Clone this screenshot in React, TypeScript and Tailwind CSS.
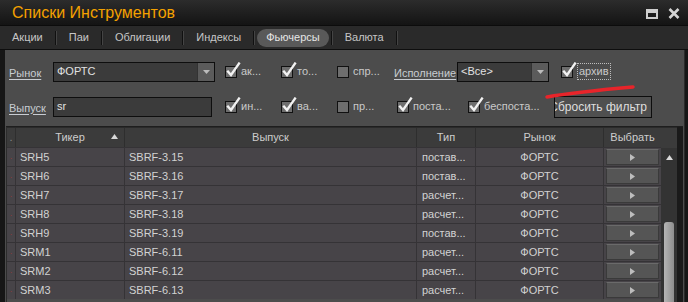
import React from 'react';

const font = { fontFamily: '"Liberation Sans", Arial, sans-serif' };

const rows = [
  { ticker: 'SRH5', issue: 'SBRF-3.15', type: 'постав...' },
  { ticker: 'SRH6', issue: 'SBRF-3.16', type: 'постав...' },
  { ticker: 'SRH7', issue: 'SBRF-3.17', type: 'расчет...' },
  { ticker: 'SRH8', issue: 'SBRF-3.18', type: 'расчет...' },
  { ticker: 'SRH9', issue: 'SBRF-3.19', type: 'постав...' },
  { ticker: 'SRM1', issue: 'SBRF-6.11', type: 'расчет...' },
  { ticker: 'SRM2', issue: 'SBRF-6.12', type: 'расчет...' },
  { ticker: 'SRM3', issue: 'SBRF-6.13', type: 'расчет...' },
];

const tabs = ['Акции', 'Паи', 'Облигации', 'Индексы', 'Фьючерсы', 'Валюта'];

const Check = ({ checked, label, width, focus }: { checked: boolean; label: string; width: string; focus?: boolean }) => (
  <div className={`flex items-center shrink-0 ${width}`}>
    <div className="relative w-[12px] h-[12px] border border-[#111] bg-[#6e6e6e] shrink-0">
      {checked && (
        <svg className="absolute -top-[5px] left-[0px]" width="15" height="16" viewBox="0 0 15 16">
          <path d="M2 9.5 L5 13 L13 1.5" fill="none" stroke="#f2f2f2" strokeWidth="2.3" strokeLinecap="square" />
        </svg>
      )}
    </div>
    <span
      className={`ml-[4px] text-[11px] text-[#c9c9c9] leading-none ${focus ? 'border border-dotted border-[#bdbdbd] px-[1px] py-[2px]' : ''}`}
    >
      {label}
    </span>
  </div>
);

const LinkLabel = ({ text, width }: { text: string; width: string }) => (
  <div className={`shrink-0 ${width}`}>
    <span className="text-[11px] text-[#c8ccd2] underline underline-offset-2">{text}</span>
  </div>
);

const Select = ({ value, width }: { value: string; width: string }) => (
  <div className={`flex h-[20px] border border-[#0e0e0e] bg-[#3b3b3b] shrink-0 ${width}`}>
    <div className="flex-1 flex items-center pl-[3px] text-[11px] text-[#e2e2e2]">{value}</div>
    <div className="w-[17px] flex items-center justify-center bg-[#5b5b5b] border-l border-[#333]">
      <svg width="7" height="4" viewBox="0 0 7 4">
        <path d="M0 0 H7 L3.5 4 Z" fill="#bcbcbc" />
      </svg>
    </div>
  </div>
);

const Sep = () => <span className="w-[2px] h-[14px] border-l border-[#101010] border-r border-r-[#444] mx-[7px]" />;

const cols = 'grid grid-cols-[9px_109px_292px_59px_128px_57px]';

export default function App() {
  return (
    <div className="relative w-[688px] h-[302px] overflow-hidden bg-[#161616] flex flex-col" style={font}>
      {/* Title bar */}
      <div className="h-[25px] shrink-0 flex items-center justify-between pl-[12px] pr-[8px] bg-gradient-to-b from-[#2c2c2c] to-[#141414]">
        <span className="text-[16px] leading-none text-[#f4a100]">Списки Инструментов</span>
        <div className="flex items-center gap-[10px] pt-[2px]">
          <div className="w-[12px] h-[10px] border-2 border-t-[4px] border-[#cfcfcf]" />
          <svg width="12" height="11" viewBox="0 0 12 11">
            <path d="M1.5 1 L10.5 10 M10.5 1 L1.5 10" stroke="#d4d4d4" strokeWidth="2.6" />
          </svg>
        </div>
      </div>

      {/* Tabs */}
      <div className="h-[24px] shrink-0 flex items-center bg-[#2a2a2a] border-t border-[#0c0c0c] pl-[7px]">
        {tabs.map((t) => (
          <React.Fragment key={t}>
            {t === 'Фьючерсы' ? (
              <span className="px-[9px] h-[18px] -mx-[5px] flex items-center rounded-full bg-[#595959] text-[11px] text-[#e6e6e6]">
                {t}
              </span>
            ) : (
              <span className="px-[5px] text-[11px] text-[#c6c6c6]">{t}</span>
            )}
            <Sep />
          </React.Fragment>
        ))}
      </div>

      {/* Panel */}
      <div className="flex-1 flex flex-col border-t border-[#0e0e0e] pl-[5px] pr-[3px] bg-[#161616]">
        <div className="flex-1 flex flex-col bg-[#4c4c4c] border-r border-[#2a2a2a]">
          {/* Filters */}
          <div className="h-[76px] shrink-0 flex flex-col pt-[11px] pl-[4px]">
            <div className="flex items-center h-[21px]">
              <LinkLabel text="Рынок" width="w-[44px]" />
              <Select value="ФОРТС" width="w-[162px]" />
              <div className="w-[10px] shrink-0" />
              <Check checked label="ак..." width="w-[56px]" />
              <Check checked label="то..." width="w-[56px]" />
              <Check checked={false} label="спр..." width="w-[57px]" />
              <LinkLabel text="Исполнение" width="w-[63px]" />
              <Select value="<Все>" width="w-[92px]" />
              <div className="w-[12px] shrink-0" />
              <Check checked focus label="архив" width="w-[60px]" />
            </div>
            <div className="flex items-center h-[23px] mt-[13px]">
              <LinkLabel text="Выпуск" width="w-[44px]" />
              <div className="w-[159px] h-[20px] shrink-0 border border-[#0e0e0e] bg-[#3b3b3b] flex items-center pl-[3px] text-[11px] text-[#e2e2e2]">
                sr
              </div>
              <div className="w-[13px] shrink-0" />
              <Check checked label="ин..." width="w-[56px]" />
              <Check checked label="ва..." width="w-[56px]" />
              <Check checked={false} label="пр..." width="w-[60px]" />
              <Check checked label="поста..." width="w-[71px]" />
              <Check checked label="беспоста..." width="w-[86px]" />
              <div className="w-[98px] h-[22px] shrink-0 border border-[#0d0d0d] bg-[#4f4f4f] overflow-hidden flex items-center justify-end pr-[4px]">
                <span className="text-[12px] text-[#dedede] whitespace-nowrap">Сбросить фильтр</span>
              </div>
            </div>
          </div>

          {/* Table */}
          <div className="flex-1 flex border-t border-[#1e1e1e] mx-[1px]">
            <div className="flex flex-col border-l border-[#2c2c2c]">
              <div className={`${cols} h-[20px] bg-[#3b3b3b] border-t border-[#2a2a2a] text-[11px] text-[#cdcdcd]`}>
                <div className="flex items-center justify-center border-r border-[#2e2e2e] text-[#888]">.</div>
                <div className="relative flex items-center justify-center border-r border-[#2e2e2e]">
                  Тикер
                  <svg className="absolute right-[6px] top-[6px]" width="7" height="5" viewBox="0 0 7 5">
                    <path d="M0 5 L3.5 0 L7 5 Z" fill="#d8d8d8" />
                  </svg>
                </div>
                <div className="flex items-center justify-center border-r border-[#2e2e2e]">Выпуск</div>
                <div className="flex items-center justify-center border-r border-[#2e2e2e]">Тип</div>
                <div className="flex items-center justify-center border-r border-[#2e2e2e]">Рынок</div>
                <div className="flex items-center justify-center">Выбрать</div>
              </div>
              {rows.map((r) => (
                <div key={r.ticker} className={`${cols} h-[19px] bg-[#474448] border-t border-[#353336] text-[11px] text-[#d2d2d2]`}>
                  <div className="flex items-center justify-center border-r border-[#353336] text-[#8a3a3a] text-[9px]">.</div>
                  <div className="flex items-center pl-[4px] border-r border-[#353336]">{r.ticker}</div>
                  <div className="flex items-center pl-[4px] border-r border-[#353336]">{r.issue}</div>
                  <div className="flex items-center pl-[5px] border-r border-[#353336]">{r.type}</div>
                  <div className="flex items-center justify-center border-r border-[#353336]">ФОРТС</div>
                  <div className="flex items-center pl-[2px]">
                    <div className="w-[53px] h-[16px] bg-[#555] border border-[#3a3a3a] border-t-[#6a6a6a] flex items-center justify-center">
                      <svg width="5" height="7" viewBox="0 0 5 7">
                        <path d="M0 0 L5 3.5 L0 7 Z" fill="#bdbdbd" />
                      </svg>
                    </div>
                  </div>
                </div>
              ))}
            </div>
            {/* Scrollbar */}
            <div className="w-[16px] flex flex-col bg-[#333] border-t border-[#2a2a2a]">
              <div className="h-[20px] bg-[#3b3b3b]" />
              <div className="h-[19px] flex items-center justify-center">
                <svg width="7" height="5" viewBox="0 0 7 5">
                  <path d="M0 5 L3.5 0 L7 5 Z" fill="#dadada" />
                </svg>
              </div>
              <div className="h-[55px]" />
              <div className="flex-1 mx-[3px] rounded-t-[3px] bg-gradient-to-r from-[#b5b5b5] to-[#8e8e8e]" />
            </div>
            <div className="flex-1 bg-[#1a1a1a]" />
          </div>
        </div>
      </div>

      {/* red annotation stroke */}
      <svg className="absolute left-[544px] top-[84px] pointer-events-none" width="92" height="16" viewBox="0 0 92 16">
        <path d="M3 13 C 25 9, 55 6, 89 3" fill="none" stroke="#e8242a" strokeWidth="3.5" strokeLinecap="round" />
      </svg>
    </div>
  );
}
